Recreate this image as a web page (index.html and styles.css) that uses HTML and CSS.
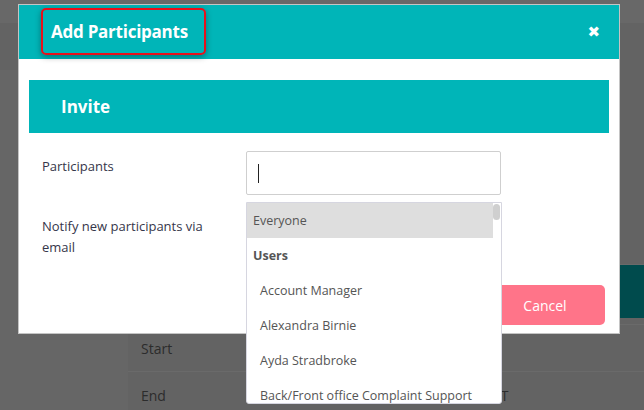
FILE: index.html
```html
<!DOCTYPE html>
<html lang="en">
<head>
    <meta charset="UTF-8">
    <title>Add Participants</title>
    <link rel="stylesheet" href="styles.css">
</head>
<body>
    <!-- page behind the modal, dimmed -->
    <div class="page">
        <div class="page-top"></div>
        <div class="page-band"></div>
        <div class="page-main">
            <div class="side"></div>
            <div class="rows">
                <div class="row row-action"><span class="dark-btn"></span></div>
                <div class="row"><span class="cell-label">Start</span></div>
                <div class="row"><span class="cell-label">End</span><span class="cell-value">GMT</span></div>
            </div>
        </div>
    </div>

    <div class="modal">
        <div class="modal-header">
            <h2 class="modal-title">Add Participants</h2>
            <span class="close">&#x2716;</span>
        </div>
        <div class="modal-body">
            <div class="section-bar">Invite</div>
            <div class="form-row form-row-first">
                <label class="form-label">Participants</label>
                <div class="field">
                    <div class="text-input"><span class="caret"></span></div>
                    <div class="dropdown">
                        <div class="scroll-thumb"></div>
                        <div class="option active">Everyone</div>
                        <div class="group">Users</div>
                        <div class="option sub">Account Manager</div>
                        <div class="option sub">Alexandra Birnie</div>
                        <div class="option sub">Ayda Stradbroke</div>
                        <div class="option sub">Back/Front office Complaint Support</div>
                    </div>
                </div>
            </div>
            <div class="form-row">
                <label class="form-label form-label-notify">Notify new participants via email</label>
            </div>
            <div class="actions">
                <button class="btn-cancel">Cancel</button>
            </div>
        </div>
    </div>
</body>
</html>
```

FILE: styles.css
```css
/* Modal over a dimmed page */
body {
    margin: 0;
    width: 644px;
    height: 410px;
    overflow: hidden;
    background-color: #646464;
    font-family: "Open Sans", "Noto Sans", Arial, sans-serif;
    position: relative;
}
.page {
    display: flex;
    flex-direction: column;
    height: 410px;
}
.page-top {
    height: 23px;
    background: #686868;
}
.page-band {
    height: 47px;
    background: #636363;
}
.page-main {
    flex: 1;
    display: flex;
    overflow: hidden;
}
.side {
    width: 128px;
    background: #666;
}
.rows {
    flex: 1;
    display: flex;
    flex-direction: column;
    padding-top: 194px;
    background: #636363;
}
.row {
    flex-shrink: 0;
    height: 46px;
    border-top: 1px solid #6a6a6a;
    display: flex;
    align-items: center;
    padding-left: 13px;
    font-size: 14px;
    color: #2c2c2c;
    white-space: nowrap;
}
.row-action {
    height: 53px;
    justify-content: flex-end;
    padding-left: 0;
    margin-bottom: 6px;
}
.dark-btn {
    width: 24px;
    height: 53px;
    background: #004b4d;
}
.cell-label {
    width: 337px;
}

.modal {
    position: absolute;
    left: 18px;
    top: 4px;
    width: 600px;
    height: 328px;
    background: #fff;
    border: 1px solid #c4c4c4;
}
.modal-header {
    height: 54px;
    background: #00b5b8;
    display: flex;
    align-items: center;
    justify-content: space-between;
    padding: 0 19px 0 22px;
}
.modal-title {
    margin: 0 0 1px;
    padding: 0 16px 0 8px;
    height: 43px;
    line-height: 43px;
    font-size: 17px;
    font-weight: 700;
    color: #fff;
    border: 2px solid #e8101a;
    border-radius: 5px;
    box-shadow: 0 2px 6px rgba(0, 0, 0, 0.35);
    letter-spacing: -0.25px;
}
.close {
    color: #fff;
    font-size: 15px;
    font-family: "DejaVu Sans", sans-serif;
    font-weight: 700;
}
.modal-body {
    padding: 21px 10px 0;
}
.section-bar {
    height: 53px;
    line-height: 53px;
    background: #00b5b8;
    color: #fff;
    font-size: 17px;
    font-weight: 700;
    padding-left: 32px;
}
.form-row {
    display: flex;
    padding-left: 13px;
}
.form-row-first {
    margin-top: 18px;
}
.form-label {
    width: 204px;
    font-size: 13px;
    line-height: 21px;
    color: #36364a;
    padding-top: 5px;
}
.form-label-notify {
    width: 180px;
    padding-top: 21px;
}
.field {
    position: relative;
}
.text-input {
    width: 242px;
    height: 42px;
    border: 1px solid #cfcfcf;
    border-radius: 2px;
    display: flex;
    align-items: center;
    padding-left: 11px;
}
.caret {
    width: 1px;
    height: 19px;
    background: #222;
}
.dropdown {
    position: absolute;
    left: 0;
    top: 51px;
    width: 254px;
    height: 200px;
    background: #fff;
    border: 1px solid #d6d6e0;
    border-radius: 0 0 3px 3px;
    overflow: hidden;
    z-index: 2;
    font-size: 12.5px;
    color: #555;
}
.scroll-thumb {
    position: absolute;
    right: 1px;
    top: 1px;
    width: 7px;
    height: 16px;
    border-radius: 4px;
    background: #cfcfcf;
}
.option, .group {
    height: 35px;
    line-height: 35px;
    padding-left: 6px;
    margin-right: 8px;
    white-space: nowrap;
}
.option.active {
    background: #dedede;
}
.group {
    font-weight: 700;
}
.option.sub {
    padding-left: 13px;
}
.actions {
    display: flex;
    justify-content: flex-end;
    margin-top: 27px;
    padding-right: 4px;
}
.btn-cancel {
    width: 120px;
    height: 40px;
    border: none;
    border-radius: 5px;
    background: #ff7489;
    color: #fff;
    font-family: inherit;
    font-size: 14px;
}
```
